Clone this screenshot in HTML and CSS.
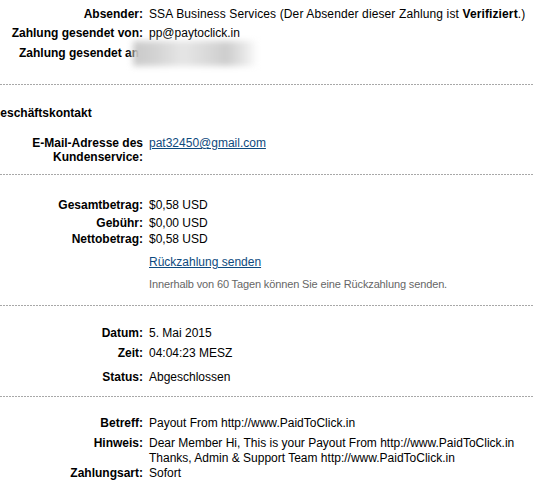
FILE: index.html
```html
<!DOCTYPE html>
<html lang="de">
<head>
<meta charset="utf-8">
<title>Zahlungsdetails</title>
<link rel="stylesheet" href="styles.css">
</head>
<body>
<div class="page">
  <section class="sec sender">
    <div class="row"><div class="lbl">Absender:</div><div class="val nowrap wide">SSA Business Services (Der Absender dieser Zahlung ist <b>Verifiziert</b>.)</div></div>
    <div class="row gap5"><div class="lbl">Zahlung gesendet von:</div><div class="val">pp@paytoclick.in</div></div>
    <div class="row gap6 masked"><div class="lbl">Zahlung gesendet an:</div><div class="val">&nbsp;</div><span class="blur"></span></div>
  </section>
  <div class="divider"></div>
  <section class="sec contact">
    <div class="heading">Geschäftskontakt</div>
    <div class="row gap16"><div class="lbl">E-Mail-Adresse des Kundenservice:</div><div class="val"><a href="#" class="link">pat32450@gmail.com</a></div></div>
  </section>
  <div class="divider"></div>
  <section class="sec amounts">
    <div class="row"><div class="lbl">Gesamtbetrag:</div><div class="val">$0,58 USD</div></div>
    <div class="row gap4"><div class="lbl">Gebühr:</div><div class="val">$0,00 USD</div></div>
    <div class="row gap2"><div class="lbl">Nettobetrag:</div><div class="val">$0,58 USD</div></div>
    <div class="row gap9"><div class="lbl"></div><div class="val"><a href="#" class="link">Rückzahlung senden</a></div></div>
    <div class="row gap8"><div class="lbl"></div><div class="val note">Innerhalb von 60 Tagen können Sie eine Rückzahlung senden.</div></div>
  </section>
  <div class="divider"></div>
  <section class="sec dates">
    <div class="row"><div class="lbl">Datum:</div><div class="val">5. Mai 2015</div></div>
    <div class="row gap6"><div class="lbl">Zeit:</div><div class="val">04:04:23 MESZ</div></div>
    <div class="row gap10"><div class="lbl">Status:</div><div class="val">Abgeschlossen</div></div>
  </section>
  <div class="divider"></div>
  <section class="sec details">
    <div class="row"><div class="lbl">Betreff:</div><div class="val">Payout From http://www.PaidToClick.in</div></div>
    <div class="row gap6 tall"><div class="lbl">Hinweis:</div><div class="val">Dear Member Hi, This is your Payout From http://www.PaidToClick.in<br>Thanks, Admin &amp; Support Team http://www.PaidToClick.in</div></div>
    <div class="row"><div class="lbl">Zahlungsart:</div><div class="val">Sofort</div></div>
  </section>
</div>
</body>
</html>
```

FILE: styles.css
```css
html, body {
  margin: 0;
  padding: 0;
  background: #fff;
}

body {
  font-family: "Liberation Sans", Arial, sans-serif;
  font-size: 12px;
  line-height: 14px;
  color: #000;
  overflow: hidden;
}

.page {
  width: 533px;
}

.row {
  display: grid;
  grid-template-columns: 143px 1fr;
  column-gap: 6px;
}

.lbl {
  font-weight: bold;
  text-align: right;
}

.val b {
  font-weight: bold;
}

.nowrap {
  white-space: nowrap;
}

.wide {
  letter-spacing: 0.12px;
}

.gap2 { margin-top: 2px; }
.gap4 { margin-top: 4px; }
.gap5 { margin-top: 5px; }
.gap6 { margin-top: 6px; }
.gap8 { margin-top: 8px; }
.gap9 { margin-top: 9px; }
.gap10 { margin-top: 10px; }
.gap16 { margin-top: 16px; }

.tall {
  line-height: 15px;
}

.divider {
  height: 1px;
  background-image: linear-gradient(to right, #a8a8a8 0 2px, transparent 2px 3px);
  background-size: 3px 1px;
  background-repeat: repeat-x;
}

.sender {
  padding: 7px 0 24px;
}

.contact {
  padding: 21px 0 10px;
}

.amounts {
  padding: 23px 0 14px;
}

.dates {
  padding: 20px 0 12px;
}

.details {
  padding: 19px 0 20px;
}

.heading {
  font-weight: bold;
  margin-left: -9px;
}

.link {
  color: #0e4a7e;
  text-decoration: underline;
}

.note {
  font-size: 11px;
  color: #666;
  letter-spacing: -0.13px;
}

.masked {
  position: relative;
}

.blur {
  position: absolute;
  left: 133px;
  top: -5px;
  width: 125px;
  height: 25px;
  background: linear-gradient(to right, #c9c9c9 0%, #d3d3d3 18%, #e6e6e6 40%, #dadada 58%, #cdcdcd 75%, #e8e8e8 90%, #fff 100%);
  filter: blur(3px);
}
```
